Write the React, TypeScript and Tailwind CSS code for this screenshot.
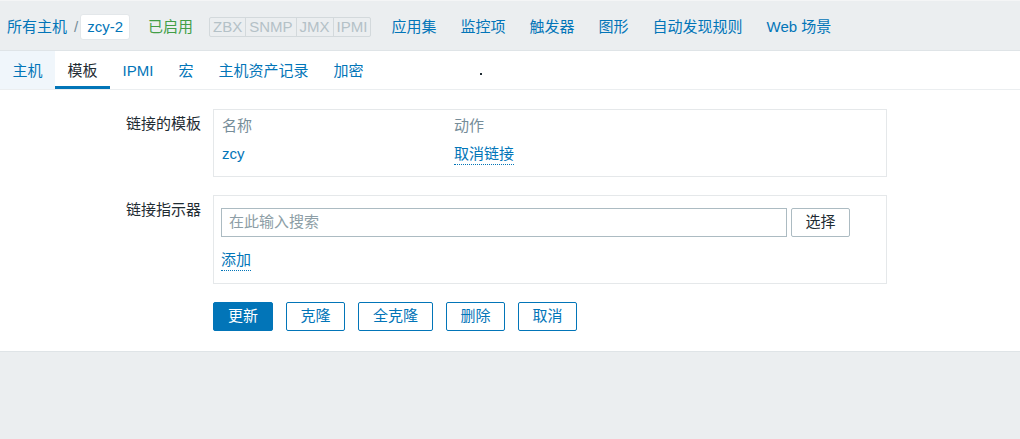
import React from "react";

const MENU = ["应用集", "监控项", "触发器", "图形", "自动发现规则", "Web 场景"];
const TABS = ["主机", "模板", "IPMI", "宏", "主机资产记录", "加密"];
const TAGS = ["ZBX", "SNMP", "JMX", "IPMI"];
const ACTIONS = [
  { label: "更新", w: "w-[60px]", primary: true },
  { label: "克隆", w: "w-[59px]" },
  { label: "全克隆", w: "w-[75px]" },
  { label: "删除", w: "w-[59px]" },
  { label: "取消", w: "w-[59px]" },
];

export default function App() {
  return (
    <div className="min-h-screen bg-[#ebeef0] text-[15px] text-[#1f2c33] font-['Liberation_Sans','Noto_Sans_CJK_SC',sans-serif]">
      {/* barra superior del host */}
      <div className="h-[51px] flex items-center pl-[7px] pt-[3px] border-t border-[#f4f5f6] border-b border-b-[#dfe4e7]">
        <span className="text-[#0275b8]">所有主机</span>
        <span className="text-[#768d99] ml-[7px]">/</span>
        <span className="ml-[2px] h-[26px] px-[6px] flex items-center bg-white border border-[#e3e7ea] rounded-[3px] text-[#0275b8]">zcy-2</span>
        <span className="ml-[18px] text-[#429e47]">已启用</span>
        <div className="ml-[16px] flex h-[20px] border border-[#d3d9dc] rounded-[2px] text-[#b4c1c7] leading-[18px]">
          {TAGS.map((t, i) => (
            <span key={t} className={`px-[3px] ${i > 0 ? "border-l border-[#d3d9dc]" : ""}`}>{t}</span>
          ))}
        </div>
        <div className="ml-[20px] flex gap-[24px] text-[#0275b8]">
          {MENU.map((m) => <span key={m}>{m}</span>)}
        </div>
      </div>

      {/* pestañas */}
      <div className="bg-white">
        <div className="h-[39px] flex items-stretch border-b border-[#ebeef0]">
          {TABS.map((t, i) => (
            <div
              key={t}
              className={`px-[12.5px] pt-[5px] flex items-center border-b-[3px] ${i === 1 ? "border-[#0275b8] text-[#1f2c33]" : "border-transparent text-[#0275b8]"} ${i === 0 ? "bg-[#f0f6fb]" : ""}`}
            >
              {t}
            </div>
          ))}
          <span className="ml-[104px] mt-[22px] w-[2px] h-[2px] bg-[#1f2c33]" />
        </div>

        {/* formulario */}
        <div className="pt-[19px] pb-[20px] border-b border-[#dfe4e7]">
          <div className="flex">
            <div className="w-[201px] text-right pt-[5px] leading-[20px]">链接的模板</div>
            <div className="ml-[12px] w-[674px] border border-[#e5e8ea] px-[8px] pt-[2px] pb-[8px]">
              <div className="h-7 flex items-center text-[#768d99]">
                <span className="w-[232px]">名称</span>
                <span>动作</span>
              </div>
              <div className="h-7 flex items-center">
                <span className="w-[232px] text-[#0275b8]">zcy</span>
                <span className="leading-[20px] text-[#0275b8] border-b border-dotted border-[#0275b8]">取消链接</span>
              </div>
            </div>
          </div>

          <div className="flex mt-[18px]">
            <div className="w-[201px] text-right pt-[5px] leading-[20px]">链接指示器</div>
            <div className="ml-[12px] w-[674px] border border-[#e5e8ea] px-[7px] pt-[12px] pb-[12px]">
              <div className="flex">
                <div className="w-[566px] h-[29px] border border-[#acbbc2] px-[7px] flex items-center text-[#8d9ea6]">在此输入搜索</div>
                <div className="ml-[4px] w-[59px] h-[29px] border border-[#acbbc2] rounded-[2px] flex items-center justify-center">选择</div>
              </div>
              <div className="mt-[13px] flex">
                <span className="leading-[20px] text-[#0275b8] border-b border-dotted border-[#0275b8]">添加</span>
              </div>
            </div>
          </div>

          <div className="flex gap-[13px] mt-[18px] ml-[213px]">
            {ACTIONS.map((a) => (
              <div
                key={a.label}
                className={`${a.w} h-[29px] rounded-[2px] border border-[#0275b8] flex items-center justify-center ${a.primary ? "bg-[#0275b8] text-white" : "bg-white text-[#0275b8]"}`}
              >
                {a.label}
              </div>
            ))}
          </div>
        </div>
      </div>
    </div>
  );
}
